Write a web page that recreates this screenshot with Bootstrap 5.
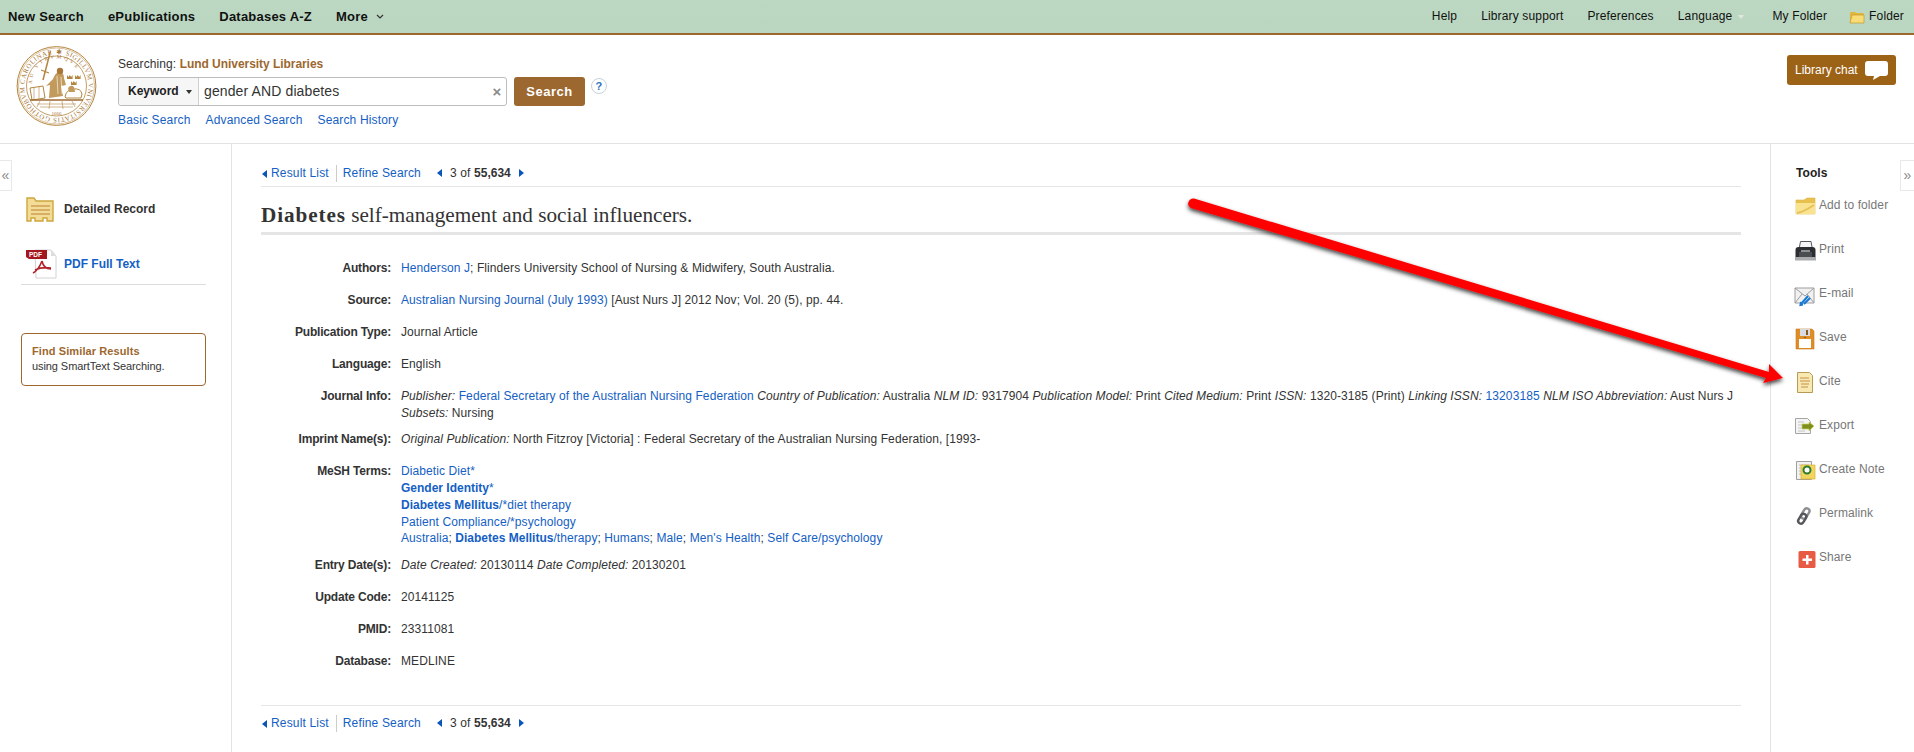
<!DOCTYPE html>
<html lang="en">
<head>
<meta charset="utf-8">
<title>Diabetes self-management and social influencers.</title>
<link href="https://cdn.jsdelivr.net/npm/bootstrap@5.3.0/dist/css/bootstrap.min.css" rel="stylesheet">
<style>
html,body{height:100%}
body{font-family:"Liberation Sans",Arial,sans-serif;font-size:12px;line-height:17px;letter-spacing:.09px;color:#333;background:#fff;overflow:hidden;position:relative}
a{color:#1460c4;text-decoration:none}
b{letter-spacing:0}
.topbar{height:35px;background:linear-gradient(#bcd8c2,#bad6c0);border-bottom:2px solid #9c682f;padding:0 10px 0 8px;flex-wrap:nowrap;color:#111}
.topbar a{color:#111}
.mainlinks{gap:24px;font-weight:700;font-size:13px;letter-spacing:.22px}
.utillinks{gap:24px;font-size:12px;letter-spacing:.15px}
.myfolder{margin-left:4px}
.tinychev{width:8px;height:5px;margin-left:8px;vertical-align:2px}
.caretlite{width:0;height:0;border:3px solid transparent;border-top:4px solid #dfe9e0;display:inline-block;margin-left:6px;vertical-align:-2px}
.folderlink{margin-left:-2px}
.sitehead{height:109px;border-bottom:1px solid #e3e3e3;padding:11px 18px 0 16px}
.sealmark{width:81px;height:80px;flex:none}
.searchwrap{margin-left:21px;margin-top:10px;width:520px;flex:none}
.brownlabel{color:#9c682f;font-weight:700;letter-spacing:-.05px}
.searchrow{margin-top:4px;height:29px}
.searchgroup{width:389px;height:29px;border:1px solid #bdbdbd;border-radius:3px;background:#fff;flex:none;flex-wrap:nowrap;align-items:stretch}
.fieldpick{width:80px;background:#f6f6f6;border-right:1px solid #cfcfcf;font-weight:700;color:#222;padding-left:9px;border-radius:3px 0 0 3px;letter-spacing:0}
.fieldpick i{width:0;height:0;border:3px solid transparent;border-top:4px solid #333;margin:4px 0 0 7px;display:block}
.queryinput.form-control{border:0;border-radius:0;box-shadow:none;font:14px/27px "Liberation Sans",Arial,sans-serif;letter-spacing:.12px;color:#333;padding:0 6px;height:27px;min-height:0;background:transparent}
.clearx{width:18px;color:#8a8a8a;font-size:15px;font-weight:700;text-align:center;line-height:27px}
.gobtn.btn{background:#9c682f;border:0;color:#fff;font-weight:700;font-size:13px;width:71px;height:29px;padding:0;margin-left:7px;border-radius:3px;letter-spacing:.5px}
.helpdot{width:16px;height:16px;border:1px solid #c8d2dc;border-radius:50%;color:#2f72c0;font-weight:700;font-size:11px;line-height:14px;text-align:center;margin:1px 0 0 6px;background:#fff}
.searchlinks{gap:15px;margin-top:6px;letter-spacing:.15px}
.chatbtn{margin:9px 0 0 auto;width:109px;height:30px;background:#9c6216;border-radius:3px;color:#fff;padding:0 8px;justify-content:space-between;letter-spacing:0}
.bubble{width:23px;height:19px;flex:none}
.cols{height:calc(100% - 144px)}
.leftcol{width:232px;flex:none;border-right:1px solid #e3e3e3;padding:50px 25px 0 21px}
.rightcol{width:144px;flex:none;border-left:1px solid #e3e3e3;padding:21px 0 0 25px}
.maincol{flex:1 1 0;min-width:0;padding:21px 29px 0 29px}
.sidetab{position:absolute;top:160px;height:31px;width:13px;border:1px solid #e8e8e8;color:#888;font-size:14px;line-height:28px;text-align:center;background:#fff}
.tabl{left:-1px}.tabr{right:0;width:14px;border-right:0}
.recrow{height:30px;gap:10px;padding-left:5px;font-weight:700;letter-spacing:0}
.recrow svg{flex:none;overflow:visible}
.recdetail{color:#333;margin-bottom:25px}
.recpdf{gap:7px}
.recrule{border-bottom:1px solid #ddd;height:6px;margin-bottom:48px}
.similar{height:53px;border:1px solid #9c682f;border-radius:4px;padding:10px;line-height:15px;font-size:11px;letter-spacing:-.08px}
.similar b{color:#9c682f;display:block;letter-spacing:.1px}
.pager{height:22px;gap:0;border-bottom:1px solid #e6e6e6;padding-left:1px;letter-spacing:.16px}
.pagerb{border-bottom:0;border-top:1px solid #e6e6e6;height:auto;padding-top:9px;margin-top:35px}
.tri{width:0;height:0;border:4px solid transparent;display:inline-block}
.tleft{border-right:5px solid #0a55b8;border-left:0}
.tright{border-left:5px solid #0a55b8;border-right:0}
.pipe{border-left:1px solid #ccc;height:17px;margin:0 6px 0 7px}
.rectitle{font-family:"Liberation Serif","Times New Roman",serif;font-size:21.2px;line-height:24px;letter-spacing:0;margin:16px 0 0;padding-bottom:5px;border-bottom:3px solid #e5e5e5;color:#333;font-weight:400}
.rectitle b{letter-spacing:.9px}
.recfields{margin-top:25px}
.frow{margin-bottom:15px}
.frow.tight{margin-bottom:9px}
.frow.meshrow{margin-bottom:10px}
.flabel{width:130px;flex:none;text-align:right;font-weight:700;margin-right:10px;letter-spacing:-.18px}
.meshlast{margin-top:-1px}
.toolhead{font-weight:700;color:#222;margin-bottom:1px}
.toolrow{height:44px;color:#777}
.toolrow svg{width:25px;height:24px;flex:none;overflow:visible;margin-left:-2px}
.arrowover{position:absolute;left:0;top:0;pointer-events:none}
</style>
</head>
<body>
<nav class="navbar topbar d-flex justify-content-between align-items-center">
  <div class="d-flex mainlinks">
    <a href="#">New Search</a><a href="#">ePublications</a><a href="#">Databases A-Z</a>
    <a href="#">More<svg class="tinychev" viewBox="0 0 8 5"><path d="M1 1l3 3 3-3" fill="none" stroke="#333" stroke-width="1.2"/></svg></a>
  </div>
  <div class="d-flex utillinks align-items-center">
    <a href="#">Help</a><a href="#">Library support</a><a href="#">Preferences</a>
    <a href="#">Language<span class="caretlite"></span></a>
    <a href="#" class="myfolder">My Folder</a>
    <a href="#" class="folderlink d-flex align-items-center gap-1"><svg width="16" height="14" viewBox="0 0 16 14"><path d="M1 3l1-1h4l1 1h7l1 1v9H1z" fill="#e2b53c"/><path d="M1 13L3 5h12v8z" fill="#f8dc78" stroke="#c79a2a" stroke-width=".7"/></svg>Folder</a>
  </div>
</nav>

<header class="sitehead d-flex align-items-start">
  <svg class="sealmark" viewBox="0 0 81 80" role="img" aria-label="Lund University seal">
    <g fill="none" stroke="#b4853f">
      <circle cx="40.5" cy="40" r="39.4" stroke-width="1"/>
      <circle cx="40.5" cy="40" r="38" stroke-width=".5"/>
      <circle cx="40.5" cy="40" r="30" stroke-width=".8"/>
    </g>
    <defs>
      <path id="sealring" d="M40.5 8a32 32 0 1 1-.01 0"/>
      <path id="sealinner" d="M16 38a24.500 24.500 0 0 1 49-2"/>
    </defs>
    <text font-family="Liberation Serif,serif" font-size="6.8" letter-spacing="0" fill="#a8773a"><textPath href="#sealring" textLength="196">✱ SIGILLVM VNIVERSITATIS GOTHOBVM CAROLINAE</textPath></text>
    <text font-family="Liberation Serif,serif" font-size="5.2" letter-spacing="0" fill="#a8773a"><textPath href="#sealinner" textLength="62">AD VTRVMQVE</textPath></text>
    <path d="M34.500 5L27 34" stroke="#b4853f" stroke-width="1.500"/>
    <path d="M25 24l8 3" stroke="#b4853f" stroke-width="1.200"/>
    <path d="M37 33q2-6 6-7 5 0 5 6l2 7-5 1 2 10-14 2 1-13-4 1z" fill="#c29a5c"/>
    <path d="M41 30l1 18M45 31l1 17" stroke="#fff" stroke-width=".6"/>
    <circle cx="44" cy="25" r="3.200" fill="#a8773a"/>
    <path d="M49 51q1-7 8-8 8-1 9 5l-1 4H50z" fill="#fff" stroke="#b4853f"/>
    <path d="M52 42q3-4 6-1l1 5h-6z" fill="#c29a5c"/>
    <path d="M51 29l1.400 2 1.400-2 1.400 2 1.400-2v4h-5.600zM59 29l1.400 2 1.400-2 1.400 2 1.400-2v4h-5.600zM55 35l1.400 2 1.400-2 1.400 2 1.400-2v4h-5.600z" fill="#b4853f"/>
    <path d="M14 42l13-2 2 12-13 2z" fill="#fff" stroke="#b4853f"/>
    <path d="M18 42v11M23 41v11" stroke="#b4853f" stroke-width=".6"/>
    <path d="M14 54h53" stroke="#9c682f" stroke-width="1.400"/>
    <path d="M24 55l-3 6M34 55l-1 8M46 55l1 8M56 55l3 6M21 58h39M24 61h33" stroke="#b4853f" stroke-width=".6"/>
    <text x="40.500" y="68.500" text-anchor="middle" font-family="Liberation Serif,serif" font-size="5" letter-spacing="0" fill="#a8773a">1666</text>
  </svg>
  <div class="searchwrap">
    <div>Searching: <span class="brownlabel">Lund University Libraries</span></div>
    <div class="d-flex searchrow">
      <div class="input-group searchgroup">
        <div class="fieldpick d-flex align-items-center">Keyword<i></i></div>
        <input class="form-control queryinput" type="text" value="gender AND diabetes" aria-label="Search">
        <span class="clearx">×</span>
      </div>
      <button class="btn gobtn flex-shrink-0" type="button">Search</button>
      <span class="helpdot flex-shrink-0">?</span>
    </div>
    <div class="d-flex searchlinks"><a href="#">Basic Search</a><a href="#">Advanced Search</a><a href="#">Search History</a></div>
  </div>
  <a href="#" class="chatbtn d-flex align-items-center text-white">Library chat
    <svg class="bubble" viewBox="0 0 23 19"><path d="M3 0h17a3 3 0 0 1 3 3v9a3 3 0 0 1-3 3h-5l-7 4 1-4H3a3 3 0 0 1-3-3V3a3 3 0 0 1 3-3z" fill="#fff"/></svg>
  </a>
</header>

<div class="d-flex cols">
  <aside class="leftcol">
    <div class="d-flex align-items-center recrow recdetail">
      <svg width="28" height="25" viewBox="0 0 28 25"><path d="M1 1h7l2 3h17v20h-6v-3h-4v3H9v-3H5v3H1z" fill="#f3dc95" stroke="#cda73f" stroke-width="1.400"/><path d="M5 9h19M5 13h19M5 17h19" stroke="#cf9f58" stroke-width="1.600"/></svg>
      <span>Detailed Record</span>
    </div>
    <div class="d-flex align-items-center recrow recpdf">
      <svg width="31" height="30" viewBox="0 0 31 30"><path d="M9 1h16l5 6v22H10z" fill="#fff" stroke="#d2d2d2"/><path d="M25 1v6h5z" fill="#ddd"/><path d="M0 1h21v9H3l-3-2z" fill="#a5171f"/><path d="M17 12c-2 5-5 10-9 12m9-12c1 5 4 8 9 8m-16 1c4-2 9-3 16-2" transform="translate(-1 0)" fill="none" stroke="#b2232a" stroke-width="1.600"/><text x="3" y="8" font-family="Liberation Sans,sans-serif" font-weight="700" font-size="6.500" fill="#fff">PDF</text></svg>
      <a href="#">PDF Full Text</a>
    </div>
    <div class="recrule"></div>
    <div class="similar"><b>Find Similar Results</b>using SmartText Searching.</div>
  </aside>
  <span class="sidetab tabl">«</span>

  <main class="maincol">
    <div class="d-flex align-items-start pager">
      <a href="#" class="d-flex align-items-center gap-1"><span class="tri tleft"></span>Result List</a><span class="pipe"></span><a href="#">Refine Search</a>
      <span class="tri tleft ms-3 mt-1"></span><span class="ms-2">3 of <b>55,634</b></span><span class="tri tright ms-2 mt-1"></span>
    </div>
    <h1 class="rectitle"><b>Diabetes</b> self-management and social influencers.</h1>
    <div class="recfields">
      <div class="d-flex frow"><div class="flabel">Authors:</div><div><a href="#">Henderson J</a>; Flinders University School of Nursing &amp; Midwifery, South Australia.</div></div>
      <div class="d-flex frow"><div class="flabel">Source:</div><div><a href="#">Australian Nursing Journal (July 1993)</a> [Aust Nurs J] 2012 Nov; Vol. 20 (5), pp. 44.</div></div>
      <div class="d-flex frow"><div class="flabel">Publication Type:</div><div>Journal Article</div></div>
      <div class="d-flex frow"><div class="flabel">Language:</div><div>English</div></div>
      <div class="d-flex frow tight"><div class="flabel">Journal Info:</div><div><i>Publisher:</i> <a href="#">Federal Secretary of the Australian Nursing Federation</a> <i>Country of Publication:</i> Australia <i>NLM ID:</i> 9317904 <i>Publication Model:</i> Print <i>Cited Medium:</i> Print <i>ISSN:</i> 1320-3185 (Print) <i>Linking ISSN:</i> <a href="#">13203185</a> <i>NLM ISO Abbreviation:</i> Aust Nurs J <i>Subsets:</i> Nursing</div></div>
      <div class="d-flex frow"><div class="flabel">Imprint Name(s):</div><div><i>Original Publication:</i> North Fitzroy [Victoria] : Federal Secretary of the Australian Nursing Federation, [1993-</div></div>
      <div class="d-flex frow meshrow"><div class="flabel">MeSH Terms:</div><div>
        <div><a href="#">Diabetic Diet*</a></div>
        <div><a href="#"><b>Gender Identity</b>*</a></div>
        <div><a href="#"><b>Diabetes Mellitus</b>/*diet therapy</a></div>
        <div><a href="#">Patient Compliance/*psychology</a></div>
        <div class="meshlast"><a href="#">Australia</a>; <a href="#"><b>Diabetes Mellitus</b>/therapy</a>; <a href="#">Humans</a>; <a href="#">Male</a>; <a href="#">Men's Health</a>; <a href="#">Self Care/psychology</a></div>
      </div></div>
      <div class="d-flex frow"><div class="flabel">Entry Date(s):</div><div><i>Date Created:</i> 20130114 <i>Date Completed:</i> 20130201</div></div>
      <div class="d-flex frow"><div class="flabel">Update Code:</div><div>20141125</div></div>
      <div class="d-flex frow"><div class="flabel">PMID:</div><div>23311081</div></div>
      <div class="d-flex frow mb-0"><div class="flabel">Database:</div><div>MEDLINE</div></div>
    </div>
    <div class="d-flex align-items-start pager pagerb">
      <a href="#" class="d-flex align-items-center gap-1"><span class="tri tleft"></span>Result List</a><span class="pipe"></span><a href="#">Refine Search</a>
      <span class="tri tleft ms-3 mt-1"></span><span class="ms-2">3 of <b>55,634</b></span><span class="tri tright ms-2 mt-1"></span>
    </div>
  </main>

  <aside class="rightcol">
    <div class="toolhead">Tools</div>
    <div class="d-flex align-items-center toolrow"><svg viewBox="0 0 25 24"><path d="M2 7h8l3-2h8v16H2z" fill="#e7c04e" stroke="#dcb545" stroke-width=".6"/><path d="M2 21V10h19v11z" fill="#f9e38e"/><path d="M3 20c6-1 11-4 17-8" stroke="#e6c25c" stroke-width="2" fill="none"/></svg><span>Add to folder</span></div>
    <div class="d-flex align-items-center toolrow"><svg viewBox="0 0 25 24"><path d="M6.500 4.500h10.500l1.500 8H5z" fill="#f6f6f6" stroke="#55575a"/><path d="M1.500 13q0-3 3-3h14q3 0 3 3v7h-20z" fill="#2c2e32"/><path d="M5 15h13v5H5z" fill="#4b4d50"/><path d="M7 13h9v2H7z" fill="#8d8f92"/><path d="M1 20h21v3.500H1z" fill="#a9abad"/></svg><span>Print</span></div>
    <div class="d-flex align-items-center toolrow"><svg viewBox="0 0 25 24"><path d="M1 7h19v15H1z" fill="#f1f1f1" stroke="#9d9d9d"/><path d="M1 7l10 8 9-8M1 22l7-9M20 22l-7-9" fill="none" stroke="#9d9d9d"/><path d="M14 15l-7 8m2 .5l-2.500.5.500-3M10 23l6-6" stroke="#1679d4" stroke-width="2" fill="none"/></svg><span>E-mail</span></div>
    <div class="d-flex align-items-center toolrow"><svg viewBox="0 0 25 24"><path d="M2 4h16l2 2v18H2z" fill="#df8e27" stroke="#c9791c" stroke-width=".6"/><path d="M6 4h10v7H6z" fill="#d9dbe3"/><path d="M12 5h2v5h-2z" fill="#8b5a1e"/><path d="M5 14h12v9H5z" fill="#fff"/><circle cx="11" cy="12.500" r=".8" fill="#7a4a12"/></svg><span>Save</span></div>
    <div class="d-flex align-items-center toolrow"><svg viewBox="0 0 25 24"><path d="M3.500 3.500h12l3 3v17h-15z" fill="#f8e9b2" stroke="#b79a56"/><path d="M6 9h9M6 12h10M7 15h8M7 18h7" stroke="#d6b06c" stroke-width="1.300"/></svg><span>Cite</span></div>
    <div class="d-flex align-items-center toolrow"><svg viewBox="0 0 25 24"><path d="M1.500 5.500h12l3 3v12h-15z" fill="#f5f5f5" stroke="#a4a4a4"/><path d="M4 9h6M4 12h8M4 15h5M4 18h7" stroke="#c4c4c4"/><path d="M8 11h7V9l5 4-5 5v-2H8z" fill="#7f8f1e" stroke="#c9cf5a" stroke-width=".7"/></svg><span>Export</span></div>
    <div class="d-flex align-items-center toolrow"><svg viewBox="0 0 25 24"><path d="M2.500 4.500h15v18h-15z" fill="#f1f1f1" stroke="#9f9f9f"/><path d="M5 8h10M5 11h6M5 14h6M5 17h6" stroke="#bcbcbc"/><path d="M7 8h14v14H7z" fill="#f2d55e" stroke="#d8b32f" stroke-width=".7"/><circle cx="13" cy="13" r="3.500" fill="#fff" stroke="#2f7d2c" stroke-width="2"/></svg><span>Create Note</span></div>
    <div class="d-flex align-items-center toolrow"><svg viewBox="0 0 25 24"><g fill="none" stroke-width="2.400"><rect x="8.500" y="7" width="5.500" height="11" rx="2.750" transform="rotate(32 11.250 12.500)" stroke="#8c8e90"/><rect x="5.500" y="12.500" width="5.500" height="10.500" rx="2.750" transform="rotate(32 8.250 17.750)" stroke="#55575a"/></g></svg><span>Permalink</span></div>
    <div class="d-flex align-items-center toolrow"><svg viewBox="0 0 25 24"><path d="M6 6h14a1.500 1.500 0 0 1 1.500 1.500v14a1.500 1.500 0 0 1-1.500 1.500H6a1.500 1.500 0 0 1-1.500-1.500v-14A1.500 1.500 0 0 1 6 6z" fill="#e75b45"/><path d="M12 10h2.500v3.500H18V16h-3.500v3.500H12V16H8.500v-2.500H12z" fill="#fff"/></svg><span>Share</span></div>
  </aside>
  <span class="sidetab tabr">»</span>
</div>

<svg class="arrowover" width="1914" height="752" viewBox="0 0 1914 752" aria-hidden="true">
  <defs><filter id="arrowshade" x="-5%" y="-20%" width="110%" height="150%"><feDropShadow dx="0" dy="2.500" stdDeviation="2" flood-color="#000" flood-opacity=".75"/></filter></defs>
  <path d="M1194 198.500L1769 372l0-8 14 14-20 5 3-5-575-170q-4-2-2.500-6 1.500-4 5.500-3.500z" fill="#f00" filter="url(#arrowshade)"/>
</svg>
<script src="https://cdn.jsdelivr.net/npm/bootstrap@5.3.0/dist/js/bootstrap.bundle.min.js"></script>
</body>
</html>
